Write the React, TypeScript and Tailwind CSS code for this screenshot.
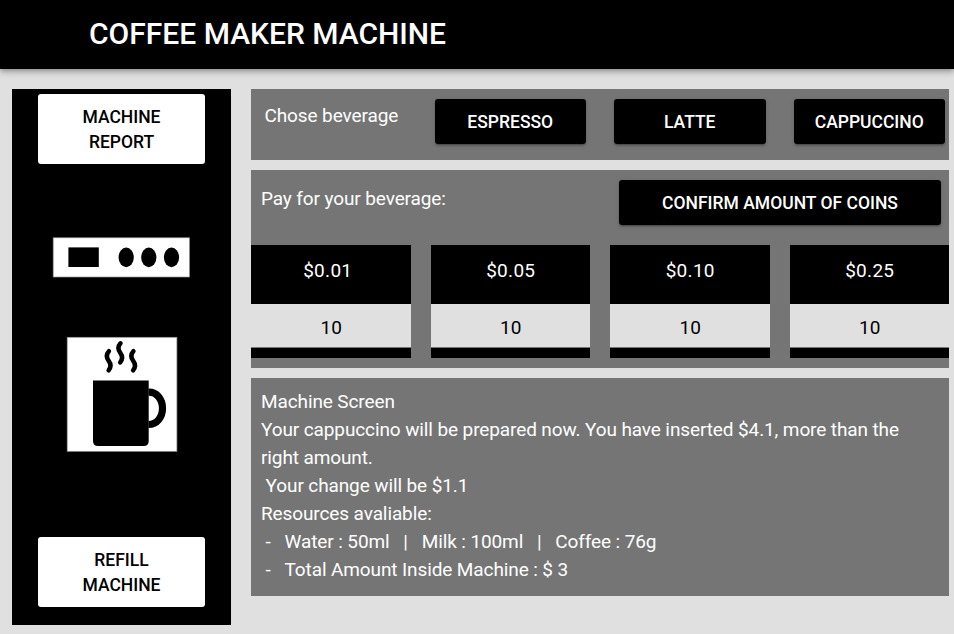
import React from 'react';

const beverages = ['ESPRESSO', 'LATTE', 'CAPPUCCINO'];
const coins = ['$0.01', '$0.05', '$0.10', '$0.25'];
const screenLines = [
  'Machine Screen',
  'Your cappuccino will be prepared now. You have inserted $4.1, more than the right amount.',
  '\u00a0Your change will be $1.1',
  'Resources avaliable:',
  '\u00a0-\u00a0\u00a0\u00a0Water : 50ml\u00a0\u00a0\u00a0|\u00a0\u00a0\u00a0Milk : 100ml\u00a0\u00a0\u00a0|\u00a0\u00a0\u00a0Coffee : 76g',
  '\u00a0-\u00a0\u00a0\u00a0Total Amount Inside Machine : $ 3',
];

function DarkButton({ children }: { children: React.ReactNode }) {
  return (
    <button className="flex h-[45px] w-full items-center justify-center rounded-[3px] bg-black pt-0.5 text-[17.5px] leading-[25px] font-medium text-white shadow-[0_3px_1px_-2px_rgba(0,0,0,0.2),0_2px_2px_0_rgba(0,0,0,0.14),0_1px_5px_0_rgba(0,0,0,0.12)]">
      {children}
    </button>
  );
}

function SideButton({ children }: { children: React.ReactNode }) {
  return (
    <button className="h-[70px] w-[167px] rounded-[3px] bg-white px-7 pt-0.5 text-center text-[17.5px] leading-[25px] font-medium text-black">
      {children}
    </button>
  );
}

function ControlPanel() {
  return (
    <svg className="mt-[73px] h-[41px] w-[139px]" viewBox="52 237 139 41">
      <rect x="53.2" y="237.8" width="136.2" height="39.2" fill="#fff" stroke="#999" strokeWidth=".7" />
      <rect x="68.4" y="247.4" width="30.4" height="19.6" />
      <ellipse cx="126.2" cy="257.4" rx="7.6" ry="9.8" />
      <ellipse cx="148.8" cy="257.4" rx="7.6" ry="9.8" />
      <ellipse cx="171.5" cy="257.4" rx="7.6" ry="9.8" />
    </svg>
  );
}

function Mug() {
  return (
    <svg className="mt-[58px] h-[117px] w-[111px]" viewBox="66 336 111 117" overflow="visible">
      <rect x="67.2" y="337.3" width="109.7" height="114" fill="#fff" stroke="#999" strokeWidth=".7" />
      <path d="M93 380.4H148.7V441q0 5-5 5H98q-5 0-5-5Z" />
      <path d="M148.5 392.2C157 392 162.5 399.5 162.5 408.3S157 424.5 148.5 424.5" fill="none" stroke="#000" strokeWidth="7.2" />
      <g fill="none" stroke="#000" strokeWidth="4.5" strokeLinecap="round">
        <path d="M108.9 351.2C106 354.5 106.2 357.5 108.7 360.8S111.2 367 108.6 370.3" />
        <path d="M120.5 343.3C117.6 346.6 117.8 349.6 120.3 352.9S122.8 359.1 120.2 362.4" />
        <path d="M133.4 351.2C130.5 354.5 130.7 357.5 133.2 360.8S135.7 367 133.1 370.3" />
      </g>
    </svg>
  );
}

export default function App() {
  return (
    <div className="flex h-[634px] w-[954px] flex-col overflow-hidden bg-[#e0e0e0] font-[Roboto,sans-serif]">
      <header className="flex h-[69px] shrink-0 items-center bg-black pb-0.5 pl-[89px] text-white shadow-[0_2px_4px_-1px_rgba(0,0,0,0.2),0_4px_5px_0_rgba(0,0,0,0.14),0_1px_10px_0_rgba(0,0,0,0.12)]">
        <h1 className="text-[30px] leading-10 font-medium">COFFEE MAKER MACHINE</h1>
      </header>
      <div className="flex gap-5 pt-5 pl-3">
        <aside className="flex h-[536px] w-[219px] flex-col items-center bg-black pt-[5px]">
          <SideButton>MACHINE REPORT</SideButton>
          <ControlPanel />
          <Mug />
          <div className="mt-auto mb-[18px]"><SideButton>REFILL MACHINE</SideButton></div>
        </aside>
        <main className="flex w-[698px] flex-col gap-2.5 text-[19px] leading-7 tracking-[-0.11px] text-white">
          <section className="flex h-[71px] bg-[#757575] pt-2.5 pl-[13.5px]">
            <p className="w-[170px] pt-[3px]">Chose beverage</p>
            <div className="grid grid-cols-3 gap-x-7">
              {beverages.map((name) => (
                <div key={name} className="w-[151.5px] tracking-normal"><DarkButton>{name}</DarkButton></div>
              ))}
            </div>
          </section>
          <section className="h-[198px] bg-[#757575] pt-2.5">
            <div className="flex h-[65px] justify-between pr-2 pl-2.5">
              <p className="pt-[5px]">Pay for your beverage:</p>
              <div className="w-[322px] tracking-normal"><DarkButton>CONFIRM AMOUNT OF COINS</DarkButton></div>
            </div>
            <div className="grid grid-cols-4 gap-x-5 tracking-normal">
              {coins.map((coin, i) => (
                <div key={coin} className="h-[113px] bg-black text-center">
                  <p className={i === 0 ? 'h-[59px] pt-3 pr-1.5 tracking-[0.3px]' : 'h-[59px] pt-3 pl-px tracking-[0.3px]'}>{coin}</p>
                  <div className="h-11 border-b border-[#757575] bg-[#e0e0e0] pt-2.5 pl-px text-black">10</div>
                </div>
              ))}
            </div>
          </section>
          <section className="h-[218px] bg-[#757575] px-2.5 pt-2.5">
            {screenLines.map((line) => (
              <p key={line}>{line}</p>
            ))}
          </section>
        </main>
      </div>
    </div>
  );
}
